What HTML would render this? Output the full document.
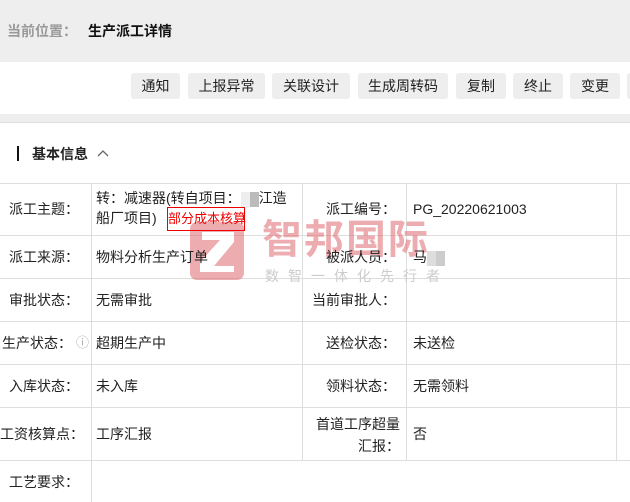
<!DOCTYPE html>
<html><head><meta charset="utf-8"><style>
*{margin:0;padding:0;box-sizing:border-box}
body{width:630px;height:502px;overflow:hidden;background:#fff;font-family:"Liberation Sans","Noto Sans CJK SC",sans-serif;font-size:14px;color:#222;position:relative}
.hdr{position:absolute;left:0;top:0;width:630px;height:62px;background:#eee}
.hdr span{position:absolute;top:21px;font-size:14px;font-weight:bold}
.bar{position:absolute;left:0;top:114px;width:630px;height:9px;background:#eee;border-bottom:1px solid #ddd}
.btn{position:absolute;top:73px;height:26px;background:#eee;border-radius:3px;font-size:14px;line-height:26px;text-align:center}
.sec{position:absolute;left:17px;top:146px;width:2px;height:15px;background:#111}
.st{position:absolute;left:32px;top:144px;font-size:14px;font-weight:bold}
.hl{position:absolute;left:0;width:630px;height:1px;background:#ddd}
.vl{position:absolute;width:1px;background:#ddd}
.t{position:absolute;white-space:nowrap;line-height:20px}
.r{text-align:right}
.blur{display:inline-block;width:9px;height:15px;vertical-align:middle}
</style></head><body>
<div class="hdr"><span style="left:7px;color:#999">当前位置：</span><span style="left:88px;color:#111">生产派工详情</span></div>
<div class="btn" style="left:131px;width:49px">通知</div>
<div class="btn" style="left:188px;width:77px">上报异常</div>
<div class="btn" style="left:272px;width:78px">关联设计</div>
<div class="btn" style="left:358px;width:90px">生成周转码</div>
<div class="btn" style="left:456px;width:50px">复制</div>
<div class="btn" style="left:513px;width:50px">终止</div>
<div class="btn" style="left:570px;width:50px">变更</div>
<div class="btn" style="left:627px;width:20px"></div>
<div class="bar"></div>
<div class="sec"></div><div class="st">基本信息</div>
<svg style="position:absolute;left:97px;top:149px" width="12" height="8"><path d="M1 7 L6 2 L11 7" fill="none" stroke="#666" stroke-width="1.3"/></svg>

<div class="hl" style="top:183px"></div>
<div class="hl" style="top:235px"></div>
<div class="hl" style="top:278px"></div>
<div class="hl" style="top:321px"></div>
<div class="hl" style="top:364px"></div>
<div class="hl" style="top:407px"></div>
<div class="hl" style="top:460px"></div>
<div class="vl" style="left:91px;top:183px;height:319px"></div>
<div class="vl" style="left:302px;top:183px;height:277px"></div>
<div class="vl" style="left:406px;top:183px;height:277px"></div>
<div class="vl" style="left:616px;top:183px;height:277px"></div>

<svg style="position:absolute;left:188px;top:220px;opacity:.55" width="260" height="66">
<rect x="2" y="2" width="54" height="58" rx="7" fill="#e06a70"/>
<path d="M14 12 H46 V22 L26 46 H46 V52 H12 V42 L32 20 H14 Z" fill="#fff"/>
</svg>
<div class="t" style="left:262px;top:218px;font-size:40px;line-height:44px;font-weight:bold;color:#e06a70;opacity:.55;letter-spacing:2px">智邦国际</div>
<div class="t" style="left:265px;top:266px;font-size:14px;color:#ccc;letter-spacing:9px">数智一体化先行者</div>

<div class="t r" style="left:0;width:79px;top:199px">派工主题：</div>
<div class="t" style="left:96px;top:188px">转：减速器(转自项目：<span class="blur" style="background:#eee"></span><span class="blur" style="background:#bbb"></span>江造</div>
<div class="t" style="left:96px;top:208px">船厂项目)</div>
<div class="t" style="left:167px;top:207px;width:78px;height:24px;border:1px solid #e00;color:#e00;font-size:13px;line-height:22px;text-align:center">部分成本核算</div>
<div class="t r" style="left:302px;width:94px;top:199px">派工编号：</div>
<div class="t" style="left:413px;top:199px">PG_20220621003</div>

<div class="t r" style="left:0;width:79px;top:247px">派工来源：</div>
<div class="t" style="left:96px;top:247px">物料分析生产订单</div>
<div class="t r" style="left:302px;width:94px;top:247px">被派人员：</div>
<div class="t" style="left:413px;top:247px">马<span class="blur" style="background:#ddd"></span><span class="blur" style="background:#ccc"></span></div>

<div class="t r" style="left:0;width:79px;top:290px">审批状态：</div>
<div class="t" style="left:96px;top:290px">无需审批</div>
<div class="t r" style="left:302px;width:94px;top:290px">当前审批人：</div>

<div class="t" style="left:2px;top:333px">生产状态：</div>
<div class="t" style="left:76px;top:333px;color:#aaa;font-size:13px">ⓘ</div>
<div class="t" style="left:96px;top:333px">超期生产中</div>
<div class="t r" style="left:302px;width:94px;top:333px">送检状态：</div>
<div class="t" style="left:413px;top:333px">未送检</div>

<div class="t r" style="left:0;width:79px;top:376px">入库状态：</div>
<div class="t" style="left:96px;top:376px">未入库</div>
<div class="t r" style="left:302px;width:94px;top:376px">领料状态：</div>
<div class="t" style="left:413px;top:376px">无需领料</div>

<div class="t r" style="left:0;width:79px;top:424px">工资核算点：</div>
<div class="t" style="left:96px;top:424px">工序汇报</div>
<div class="t r" style="left:302px;width:98px;top:413px;white-space:normal;line-height:22px">首道工序超量<br>汇报：</div>
<div class="t" style="left:413px;top:424px">否</div>

<div class="t r" style="left:0;width:79px;top:472px">工艺要求：</div>
</body></html>
